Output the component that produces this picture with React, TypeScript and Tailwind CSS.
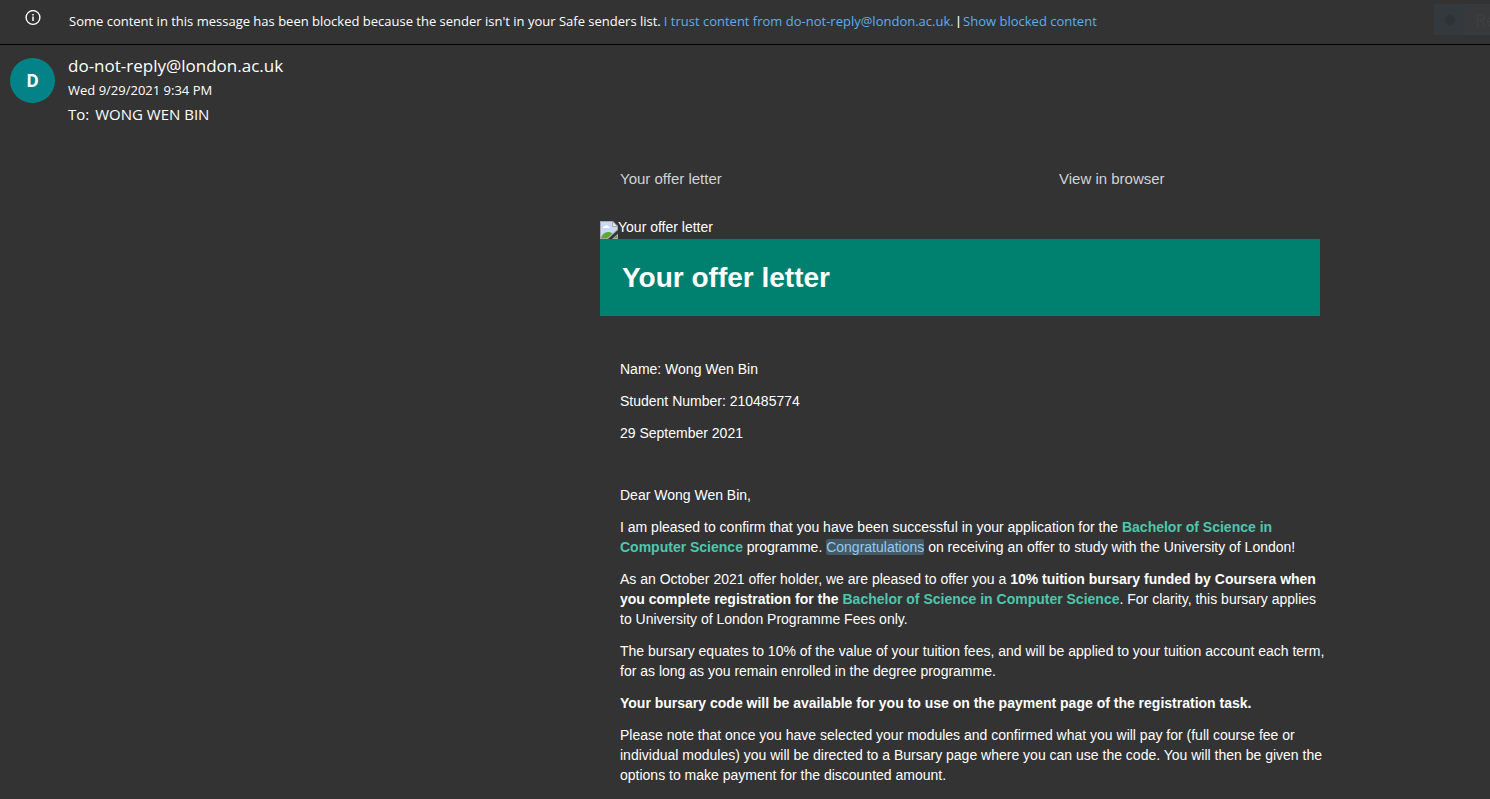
import type { ReactNode } from "react";

function InfoIcon() {
  return (
    <svg viewBox="0 0 16 16" className="size-4" fill="none" stroke="#ffffff" aria-hidden="true">
      <circle cx="8" cy="7.5" r="6.900" strokeWidth="1.400" />
      <path d="M8 6.500v4.500M8 4v1.400" strokeWidth="1.500" />
    </svg>
  );
}

function BrokenImageIcon() {
  return (
    <svg viewBox="0 0 18 18" className="size-[18px] shrink-0" aria-hidden="true">
      <path d="M0 0h13l5 5v4L8 18H0z" fill="#a9a9a9" />
      <path d="M1 1h11v5h5v2.500L7.500 17H1z" fill="#c8d8f6" />
      <path d="M13 1.500V5h3.500z" fill="#eeeeee" />
      <path d="M3 7c0-1.200.8-1.800 1.800-1.800.5-1.400 2.900-1.400 3.300.2 1 0 1.600.6 1.600 1.600z" fill="#ffffff" />
      <path d="M1 17c1.200-4 4.200-6 7.500-6 1.500 0 2.800.5 3.800 1.500L7.500 17z" fill="#57ab35" />
      <path d="M18 12.500V18h-6z" fill="#a9a9a9" />
      <path d="M17 14.500V17h-2.500z" fill="#57ab35" />
    </svg>
  );
}

function Programme({ children }: { children: ReactNode }) {
  return <strong className="font-bold text-[#4dc7ad]">{children}</strong>;
}

export default function App() {
  return (
    <div className="h-screen overflow-hidden bg-[#333333] text-white font-['Open_Sans','Noto_Sans',sans-serif]">
      <div className="flex h-[45px] items-start border-b border-black">
        <div className="flex w-[69px] shrink-0 pt-[10px] pl-[25px]">
          <InfoIcon />
        </div>
        <p className="flex grow gap-[3px] pt-[11px] text-[13px] leading-5 whitespace-nowrap">
          <span>
            Some content in this message has been blocked because the sender isn't in your Safe senders list.
          </span>
          <a href="#trust" className="text-[#5aaff0]">I trust content from do-not-reply@london.ac.uk.</a>
          <span className="font-['Liberation_Sans',sans-serif]">|</span>
          <a href="#show" className="text-[#5aaff0]">Show blocked content</a>
        </p>
        <div className="mt-1 flex h-[31px] w-14 shrink-0 overflow-hidden" aria-hidden="true">
          <div className="flex w-[31px] shrink-0 items-center justify-center bg-[#33393d]">
            <div className="size-[10px] rounded-full bg-[#303336]" />
          </div>
          <div className="shrink-0 bg-[#37393a] pl-[10px] text-lg leading-8 text-[#3e4041]">Re</div>
        </div>
      </div>

      <header className="flex gap-[13px] pt-[9px] pl-[10px]">
        <div className="mt-1 flex size-[45px] shrink-0 items-center justify-center rounded-full bg-[#038387] text-[17px] font-bold">
          D
        </div>
        <div>
          <h2 className="text-[17px] leading-6">do-not-reply@london.ac.uk</h2>
          <p className="text-[13px] leading-6">Wed 9/29/2021 9:34 PM</p>
          <p className="flex gap-1.5 text-[15px] leading-6">
            <span>To:</span>
            <span>WONG WEN BIN</span>
          </p>
        </div>
      </header>

      <article className="ml-[600px] max-w-[720px] pt-[43px] font-['Liberation_Sans',Arial,sans-serif] text-[14px] leading-5">
        <div className="flex px-5 text-[15px] text-[#d2d2d2]">
          <span className="w-[439px]">Your offer letter</span>
          <a href="#browser">View in browser</a>
        </div>
        <div className="mt-8 flex h-[18px] items-start">
          <BrokenImageIcon />
          <span className="leading-3">Your offer letter</span>
        </div>
        <h1 className="h-[77px] bg-[#008170] px-[22px] text-[28px] leading-[77px] font-bold">Your offer letter</h1>

        <div className="flex flex-col gap-3 pt-[43px] pl-5 whitespace-nowrap">
          <p>Name: Wong Wen Bin</p>
          <p>Student Number: 210485774</p>
          <p>29 September 2021</p>
          <p className="mt-[30px]">Dear Wong Wen Bin,</p>
          <p>
            I am pleased to confirm that you have been successful in your application for the{" "}
            <Programme>
              Bachelor of Science in
              <br />
              Computer Science
            </Programme>{" "}
            programme. <span className="rounded-xs bg-[#465a66] text-[#92cbf5]">Congratulations</span> on receiving an
            offer to study with the University of London!
          </p>
          <p>
            As an October 2021 offer holder, we are pleased to offer you a{" "}
            <strong>
              10% tuition bursary funded by Coursera when
              <br />
              you complete registration for the{" "}
            </strong>
            <Programme>Bachelor of Science in Computer Science</Programme>. For clarity, this bursary applies
            <br />
            to University of London Programme Fees only.
          </p>
          <p>
            The bursary equates to 10% of the value of your tuition fees, and will be applied to your tuition account
            each term,
            <br />
            for as long as you remain enrolled in the degree programme.
          </p>
          <p className="font-bold">
            Your bursary code will be available for you to use on the payment page of the registration task.
          </p>
          <p>
            Please note that once you have selected your modules and confirmed what you will pay for (full course fee or
            <br />
            individual modules) you will be directed to a Bursary page where you can use the code. You will then be
            given the
            <br />
            options to make payment for the discounted amount.
          </p>
        </div>
      </article>
    </div>
  );
}
